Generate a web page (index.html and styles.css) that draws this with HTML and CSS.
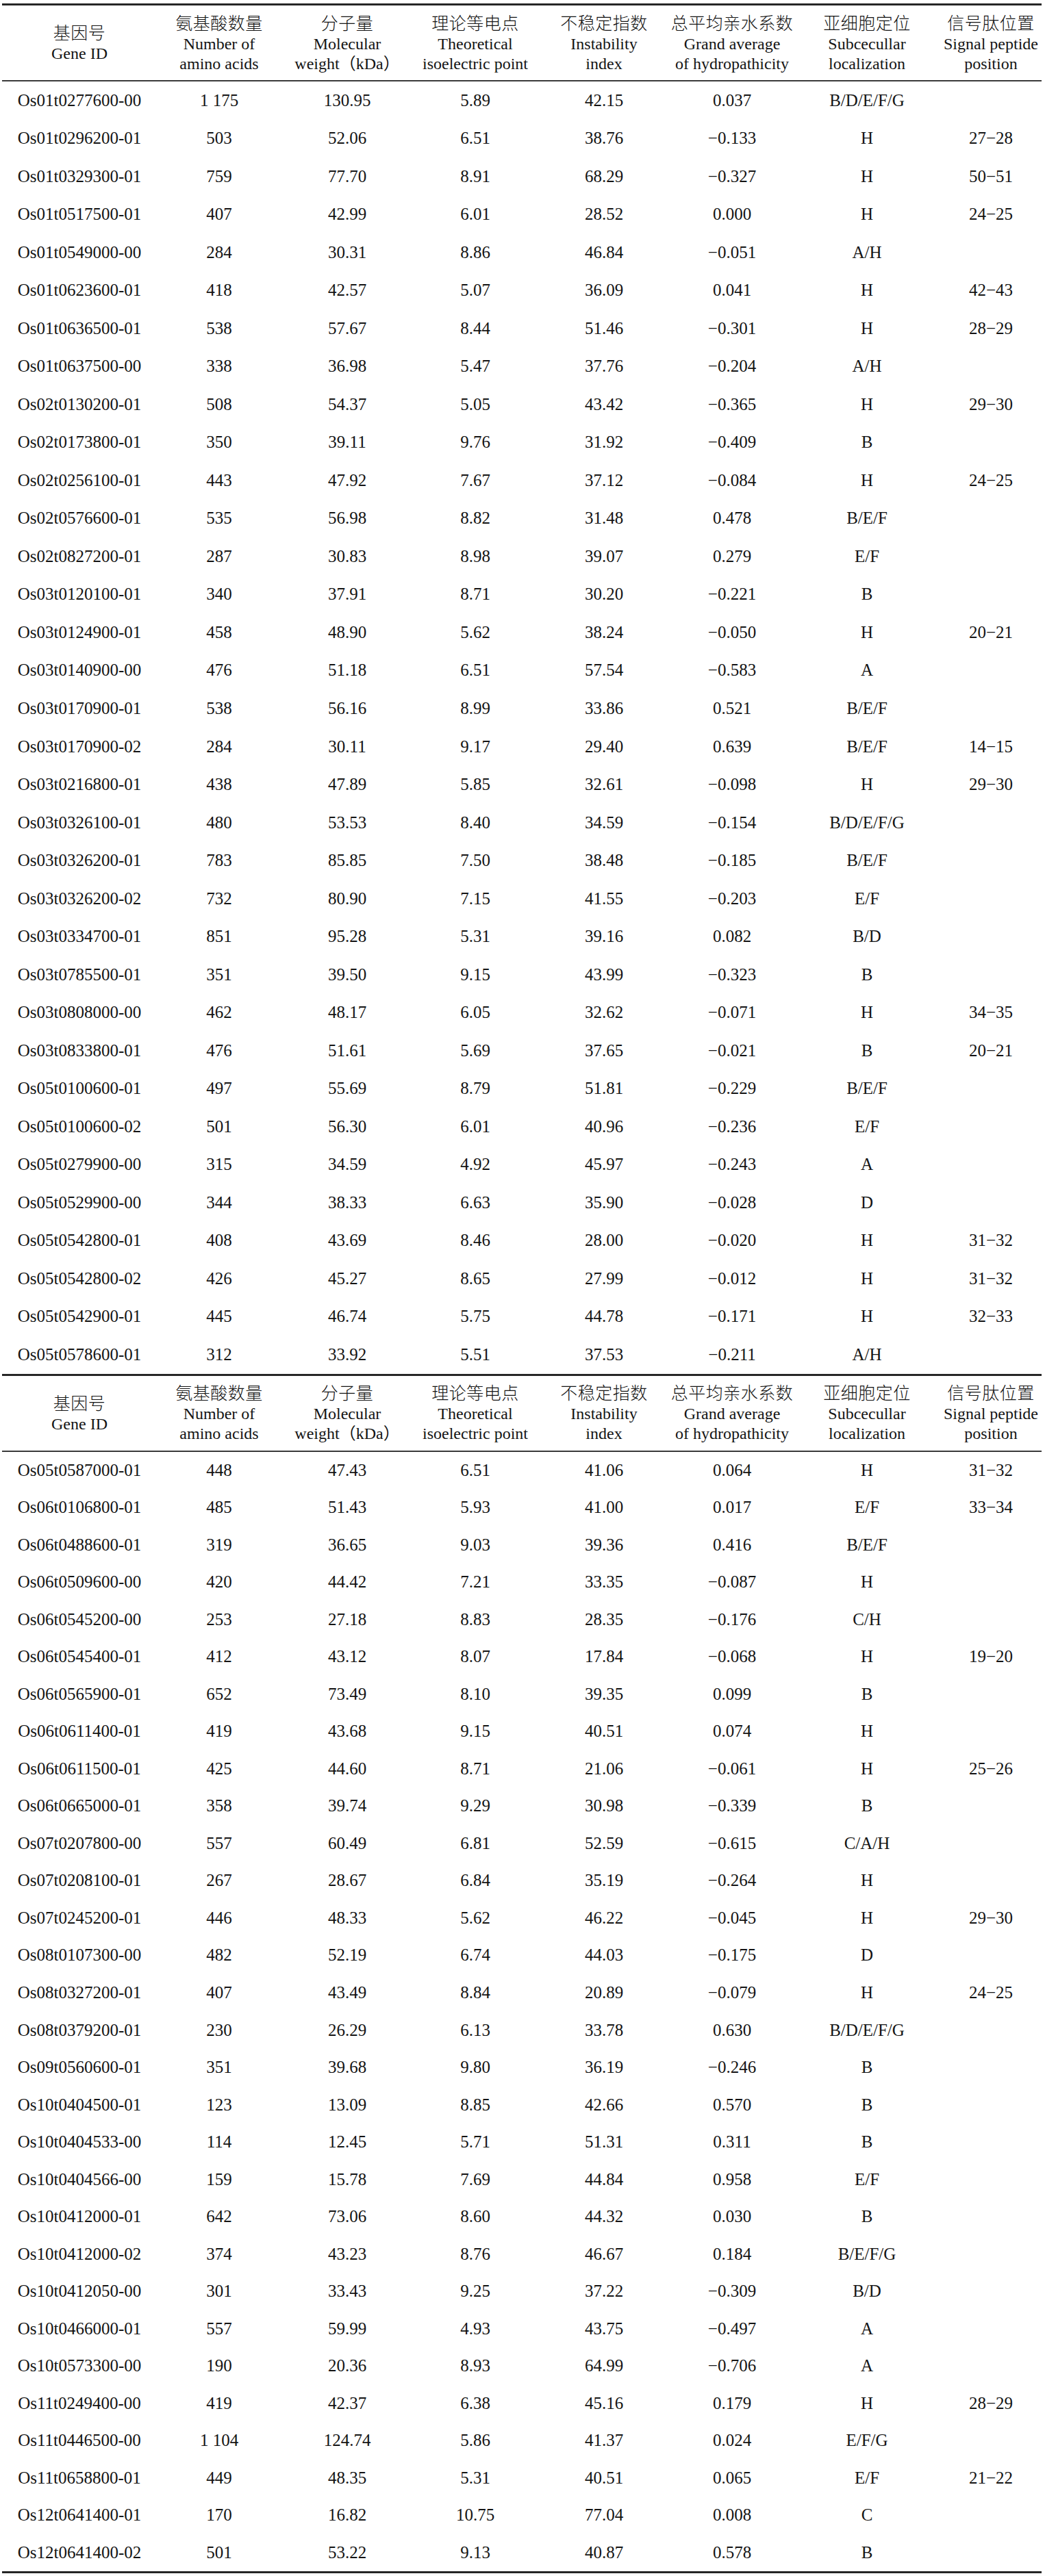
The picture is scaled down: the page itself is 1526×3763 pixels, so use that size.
FILE: index.html
```html
<!DOCTYPE html>
<html lang="zh">
<head>
<meta charset="utf-8">
<title>蛋白理化性质</title>
<link rel="stylesheet" href="styles.css">
</head>
<body>
<div class="page">
<table class="tbl t1">
<colgroup><col class="c1"><col class="c2"><col class="c3"><col class="c4"><col class="c5"><col class="c6"><col class="c7"><col class="c8"></colgroup>
<thead>
<tr>
<th><span class="cn">基因号</span><br>Gene ID</th>
<th><span class="cn">氨基酸数量</span><br>Number of<br>amino acids</th>
<th><span class="cn">分子量</span><br>Molecular<br>weight（kDa）</th>
<th><span class="cn">理论等电点</span><br>Theoretical<br>isoelectric point</th>
<th><span class="cn">不稳定指数</span><br>Instability<br>index</th>
<th><span class="cn">总平均亲水系数</span><br>Grand average<br>of hydropathicity</th>
<th><span class="cn">亚细胞定位</span><br>Subcecullar<br>localization</th>
<th><span class="cn">信号肽位置</span><br>Signal peptide<br>position</th>
</tr>
</thead>
<tbody>
<tr><td>Os01t0277600-00</td><td>1 175</td><td>130.95</td><td>5.89</td><td>42.15</td><td>0.037</td><td>B/D/E/F/G</td><td></td></tr>
<tr><td>Os01t0296200-01</td><td>503</td><td>52.06</td><td>6.51</td><td>38.76</td><td>−0.133</td><td>H</td><td>27−28</td></tr>
<tr><td>Os01t0329300-01</td><td>759</td><td>77.70</td><td>8.91</td><td>68.29</td><td>−0.327</td><td>H</td><td>50−51</td></tr>
<tr><td>Os01t0517500-01</td><td>407</td><td>42.99</td><td>6.01</td><td>28.52</td><td>0.000</td><td>H</td><td>24−25</td></tr>
<tr><td>Os01t0549000-00</td><td>284</td><td>30.31</td><td>8.86</td><td>46.84</td><td>−0.051</td><td>A/H</td><td></td></tr>
<tr><td>Os01t0623600-01</td><td>418</td><td>42.57</td><td>5.07</td><td>36.09</td><td>0.041</td><td>H</td><td>42−43</td></tr>
<tr><td>Os01t0636500-01</td><td>538</td><td>57.67</td><td>8.44</td><td>51.46</td><td>−0.301</td><td>H</td><td>28−29</td></tr>
<tr><td>Os01t0637500-00</td><td>338</td><td>36.98</td><td>5.47</td><td>37.76</td><td>−0.204</td><td>A/H</td><td></td></tr>
<tr><td>Os02t0130200-01</td><td>508</td><td>54.37</td><td>5.05</td><td>43.42</td><td>−0.365</td><td>H</td><td>29−30</td></tr>
<tr><td>Os02t0173800-01</td><td>350</td><td>39.11</td><td>9.76</td><td>31.92</td><td>−0.409</td><td>B</td><td></td></tr>
<tr><td>Os02t0256100-01</td><td>443</td><td>47.92</td><td>7.67</td><td>37.12</td><td>−0.084</td><td>H</td><td>24−25</td></tr>
<tr><td>Os02t0576600-01</td><td>535</td><td>56.98</td><td>8.82</td><td>31.48</td><td>0.478</td><td>B/E/F</td><td></td></tr>
<tr><td>Os02t0827200-01</td><td>287</td><td>30.83</td><td>8.98</td><td>39.07</td><td>0.279</td><td>E/F</td><td></td></tr>
<tr><td>Os03t0120100-01</td><td>340</td><td>37.91</td><td>8.71</td><td>30.20</td><td>−0.221</td><td>B</td><td></td></tr>
<tr><td>Os03t0124900-01</td><td>458</td><td>48.90</td><td>5.62</td><td>38.24</td><td>−0.050</td><td>H</td><td>20−21</td></tr>
<tr><td>Os03t0140900-00</td><td>476</td><td>51.18</td><td>6.51</td><td>57.54</td><td>−0.583</td><td>A</td><td></td></tr>
<tr><td>Os03t0170900-01</td><td>538</td><td>56.16</td><td>8.99</td><td>33.86</td><td>0.521</td><td>B/E/F</td><td></td></tr>
<tr><td>Os03t0170900-02</td><td>284</td><td>30.11</td><td>9.17</td><td>29.40</td><td>0.639</td><td>B/E/F</td><td>14−15</td></tr>
<tr><td>Os03t0216800-01</td><td>438</td><td>47.89</td><td>5.85</td><td>32.61</td><td>−0.098</td><td>H</td><td>29−30</td></tr>
<tr><td>Os03t0326100-01</td><td>480</td><td>53.53</td><td>8.40</td><td>34.59</td><td>−0.154</td><td>B/D/E/F/G</td><td></td></tr>
<tr><td>Os03t0326200-01</td><td>783</td><td>85.85</td><td>7.50</td><td>38.48</td><td>−0.185</td><td>B/E/F</td><td></td></tr>
<tr><td>Os03t0326200-02</td><td>732</td><td>80.90</td><td>7.15</td><td>41.55</td><td>−0.203</td><td>E/F</td><td></td></tr>
<tr><td>Os03t0334700-01</td><td>851</td><td>95.28</td><td>5.31</td><td>39.16</td><td>0.082</td><td>B/D</td><td></td></tr>
<tr><td>Os03t0785500-01</td><td>351</td><td>39.50</td><td>9.15</td><td>43.99</td><td>−0.323</td><td>B</td><td></td></tr>
<tr><td>Os03t0808000-00</td><td>462</td><td>48.17</td><td>6.05</td><td>32.62</td><td>−0.071</td><td>H</td><td>34−35</td></tr>
<tr><td>Os03t0833800-01</td><td>476</td><td>51.61</td><td>5.69</td><td>37.65</td><td>−0.021</td><td>B</td><td>20−21</td></tr>
<tr><td>Os05t0100600-01</td><td>497</td><td>55.69</td><td>8.79</td><td>51.81</td><td>−0.229</td><td>B/E/F</td><td></td></tr>
<tr><td>Os05t0100600-02</td><td>501</td><td>56.30</td><td>6.01</td><td>40.96</td><td>−0.236</td><td>E/F</td><td></td></tr>
<tr><td>Os05t0279900-00</td><td>315</td><td>34.59</td><td>4.92</td><td>45.97</td><td>−0.243</td><td>A</td><td></td></tr>
<tr><td>Os05t0529900-00</td><td>344</td><td>38.33</td><td>6.63</td><td>35.90</td><td>−0.028</td><td>D</td><td></td></tr>
<tr><td>Os05t0542800-01</td><td>408</td><td>43.69</td><td>8.46</td><td>28.00</td><td>−0.020</td><td>H</td><td>31−32</td></tr>
<tr><td>Os05t0542800-02</td><td>426</td><td>45.27</td><td>8.65</td><td>27.99</td><td>−0.012</td><td>H</td><td>31−32</td></tr>
<tr><td>Os05t0542900-01</td><td>445</td><td>46.74</td><td>5.75</td><td>44.78</td><td>−0.171</td><td>H</td><td>32−33</td></tr>
<tr><td>Os05t0578600-01</td><td>312</td><td>33.92</td><td>5.51</td><td>37.53</td><td>−0.211</td><td>A/H</td><td></td></tr>
</tbody>
</table>
<table class="tbl t2">
<colgroup><col class="c1"><col class="c2"><col class="c3"><col class="c4"><col class="c5"><col class="c6"><col class="c7"><col class="c8"></colgroup>
<thead>
<tr>
<th><span class="cn">基因号</span><br>Gene ID</th>
<th><span class="cn">氨基酸数量</span><br>Number of<br>amino acids</th>
<th><span class="cn">分子量</span><br>Molecular<br>weight（kDa）</th>
<th><span class="cn">理论等电点</span><br>Theoretical<br>isoelectric point</th>
<th><span class="cn">不稳定指数</span><br>Instability<br>index</th>
<th><span class="cn">总平均亲水系数</span><br>Grand average<br>of hydropathicity</th>
<th><span class="cn">亚细胞定位</span><br>Subcecullar<br>localization</th>
<th><span class="cn">信号肽位置</span><br>Signal peptide<br>position</th>
</tr>
</thead>
<tbody>
<tr><td>Os05t0587000-01</td><td>448</td><td>47.43</td><td>6.51</td><td>41.06</td><td>0.064</td><td>H</td><td>31−32</td></tr>
<tr><td>Os06t0106800-01</td><td>485</td><td>51.43</td><td>5.93</td><td>41.00</td><td>0.017</td><td>E/F</td><td>33−34</td></tr>
<tr><td>Os06t0488600-01</td><td>319</td><td>36.65</td><td>9.03</td><td>39.36</td><td>0.416</td><td>B/E/F</td><td></td></tr>
<tr><td>Os06t0509600-00</td><td>420</td><td>44.42</td><td>7.21</td><td>33.35</td><td>−0.087</td><td>H</td><td></td></tr>
<tr><td>Os06t0545200-00</td><td>253</td><td>27.18</td><td>8.83</td><td>28.35</td><td>−0.176</td><td>C/H</td><td></td></tr>
<tr><td>Os06t0545400-01</td><td>412</td><td>43.12</td><td>8.07</td><td>17.84</td><td>−0.068</td><td>H</td><td>19−20</td></tr>
<tr><td>Os06t0565900-01</td><td>652</td><td>73.49</td><td>8.10</td><td>39.35</td><td>0.099</td><td>B</td><td></td></tr>
<tr><td>Os06t0611400-01</td><td>419</td><td>43.68</td><td>9.15</td><td>40.51</td><td>0.074</td><td>H</td><td></td></tr>
<tr><td>Os06t0611500-01</td><td>425</td><td>44.60</td><td>8.71</td><td>21.06</td><td>−0.061</td><td>H</td><td>25−26</td></tr>
<tr><td>Os06t0665000-01</td><td>358</td><td>39.74</td><td>9.29</td><td>30.98</td><td>−0.339</td><td>B</td><td></td></tr>
<tr><td>Os07t0207800-00</td><td>557</td><td>60.49</td><td>6.81</td><td>52.59</td><td>−0.615</td><td>C/A/H</td><td></td></tr>
<tr><td>Os07t0208100-01</td><td>267</td><td>28.67</td><td>6.84</td><td>35.19</td><td>−0.264</td><td>H</td><td></td></tr>
<tr><td>Os07t0245200-01</td><td>446</td><td>48.33</td><td>5.62</td><td>46.22</td><td>−0.045</td><td>H</td><td>29−30</td></tr>
<tr><td>Os08t0107300-00</td><td>482</td><td>52.19</td><td>6.74</td><td>44.03</td><td>−0.175</td><td>D</td><td></td></tr>
<tr><td>Os08t0327200-01</td><td>407</td><td>43.49</td><td>8.84</td><td>20.89</td><td>−0.079</td><td>H</td><td>24−25</td></tr>
<tr><td>Os08t0379200-01</td><td>230</td><td>26.29</td><td>6.13</td><td>33.78</td><td>0.630</td><td>B/D/E/F/G</td><td></td></tr>
<tr><td>Os09t0560600-01</td><td>351</td><td>39.68</td><td>9.80</td><td>36.19</td><td>−0.246</td><td>B</td><td></td></tr>
<tr><td>Os10t0404500-01</td><td>123</td><td>13.09</td><td>8.85</td><td>42.66</td><td>0.570</td><td>B</td><td></td></tr>
<tr><td>Os10t0404533-00</td><td>114</td><td>12.45</td><td>5.71</td><td>51.31</td><td>0.311</td><td>B</td><td></td></tr>
<tr><td>Os10t0404566-00</td><td>159</td><td>15.78</td><td>7.69</td><td>44.84</td><td>0.958</td><td>E/F</td><td></td></tr>
<tr><td>Os10t0412000-01</td><td>642</td><td>73.06</td><td>8.60</td><td>44.32</td><td>0.030</td><td>B</td><td></td></tr>
<tr><td>Os10t0412000-02</td><td>374</td><td>43.23</td><td>8.76</td><td>46.67</td><td>0.184</td><td>B/E/F/G</td><td></td></tr>
<tr><td>Os10t0412050-00</td><td>301</td><td>33.43</td><td>9.25</td><td>37.22</td><td>−0.309</td><td>B/D</td><td></td></tr>
<tr><td>Os10t0466000-01</td><td>557</td><td>59.99</td><td>4.93</td><td>43.75</td><td>−0.497</td><td>A</td><td></td></tr>
<tr><td>Os10t0573300-00</td><td>190</td><td>20.36</td><td>8.93</td><td>64.99</td><td>−0.706</td><td>A</td><td></td></tr>
<tr><td>Os11t0249400-00</td><td>419</td><td>42.37</td><td>6.38</td><td>45.16</td><td>0.179</td><td>H</td><td>28−29</td></tr>
<tr><td>Os11t0446500-00</td><td>1 104</td><td>124.74</td><td>5.86</td><td>41.37</td><td>0.024</td><td>E/F/G</td><td></td></tr>
<tr><td>Os11t0658800-01</td><td>449</td><td>48.35</td><td>5.31</td><td>40.51</td><td>0.065</td><td>E/F</td><td>21−22</td></tr>
<tr><td>Os12t0641400-01</td><td>170</td><td>16.82</td><td>10.75</td><td>77.04</td><td>0.008</td><td>C</td><td></td></tr>
<tr><td>Os12t0641400-02</td><td>501</td><td>53.22</td><td>9.13</td><td>40.87</td><td>0.578</td><td>B</td><td></td></tr>
</tbody>
</table>
</div>
</body>
</html>
```

FILE: styles.css
```css
html, body {
  margin: 0;
  padding: 0;
  background: #ffffff;
}

body {
  color: #141414;
  font-family: "Liberation Serif", "Noto Sans CJK SC", serif;
}

.page {
  padding: 5px 5px 4px 3px;
}

.tbl {
  width: 1518px;
  table-layout: fixed;
  border-collapse: separate;
  border-spacing: 0;
}

.c1 { width: 226px; }
.c2 { width: 182px; }
.c3 { width: 192px; }
.c4 { width: 182px; }
.c5 { width: 194px; }
.c6 { width: 180px; }
.c7 { width: 214px; }
.c8 { width: 148px; }

.t1 {
  border-top: 3px solid #262626;
  border-bottom: 3px solid #262626;
}

.t2 {
  border-bottom: 3px solid #262626;
}

.tbl th {
  box-sizing: border-box;
  height: 111px;
  padding: 0;
  font-weight: normal;
  font-size: 24px;
  line-height: 29px;
  text-align: center;
  vertical-align: middle;
  border-bottom: 2px solid #3a3a3a;
  white-space: nowrap;
}

.cn {
  font-family: "Noto Sans CJK SC", sans-serif;
  font-size: 25px;
  font-weight: 300;
  letter-spacing: 0.5px;
}

.tbl td {
  padding: 0;
  font-size: 25px;
  line-height: 28px;
  text-align: center;
  vertical-align: middle;
  white-space: nowrap;
}

.t1 td { height: 55.53px; }
.t2 td { height: 54.53px; }
```
